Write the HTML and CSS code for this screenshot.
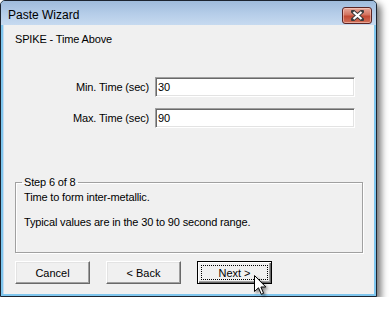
FILE: index.html
```html
<!DOCTYPE html>
<html lang="en">
<head>
    <meta charset="UTF-8">
    <title>Paste Wizard</title>
    <link rel="stylesheet" href="styles.css">
</head>
<body>
    <div class="window">
        <div class="titlebar">
            <span class="title">Paste Wizard</span>
            <span class="close">
                <svg width="13" height="11" viewBox="0 0 13 11">
                    <path d="M2 1.5 L11 9.5 M11 1.5 L2 9.5" stroke="#3b3b3b" stroke-width="4" stroke-linecap="square"/>
                    <path d="M2.5 2 L10.5 9 M10.5 2 L2.5 9" stroke="#ffffff" stroke-width="2.2"/>
                </svg>
            </span>
        </div>
        <div class="client">
            <div class="heading">SPIKE - Time Above</div>
            <div class="form">
                <div class="row">
                    <label for="min">Min. Time (sec)</label>
                    <input id="min" type="text" value="30">
                </div>
                <div class="row">
                    <label for="max">Max. Time (sec)</label>
                    <input id="max" type="text" value="90">
                </div>
            </div>
            <fieldset class="group">
                <legend>Step 6 of 8</legend>
                <p>Time to form inter-metallic.</p>
                <p class="gap">Typical values are in the 30 to 90 second range.</p>
            </fieldset>
            <div class="buttons">
                <button class="btn">Cancel</button>
                <button class="btn">&lt; Back</button>
                <button class="btn default"><span class="focus">Next &gt;</span></button>
            </div>
        </div>
    </div>
    <!-- mouse pointer over the Next button -->
    <svg class="cursor" width="14" height="21" viewBox="0 0 14 21">
        <path d="M0.5 0.5 L0.5 16.5 L4.5 12.8 L7.3 19.3 L9.6 18.3 L6.9 12 L11.8 12 Z" fill="#ffffff" stroke="#000000" stroke-width="1" stroke-linejoin="miter"/>
    </svg>
</body>
</html>
```

FILE: styles.css
```css
*{
    padding: 0;
    margin: 0;
    box-sizing: border-box;
}
body{
    background: #ffffff;
    font-family: "Liberation Sans", Arial, sans-serif;
    font-size: 11px;
    letter-spacing: -0.15px;
    color: #000000;
}
.window{
    width: 377px;
    height: 297px;
    border: 1px solid #1c2430;
    border-radius: 5px 5px 0 0;
    background: #7fc6ee;
    padding: 0 2px 2px 2px;
    display: flex;
    flex-direction: column;
    box-shadow: 4px 4px 7px rgba(0, 0, 0, 0.55);
}
.titlebar{
    height: 24px;
    margin: 0 -2px;
    padding: 0 4px 0 7px;
    border-radius: 4px 4px 0 0;
    background: linear-gradient(#9fbbdc, #b4cce8 50%, #c6daf0);
    display: flex;
    align-items: center;
    justify-content: space-between;
}
.title{
    font-size: 12px;
    letter-spacing: 0;
    color: #000000;
    margin-top: 4px;
}
.close{
    width: 30px;
    height: 17px;
    margin-top: 4px;
    border: 1px solid #5a2424;
    border-radius: 3px;
    background: linear-gradient(#e8a99c, #d2735f 45%, #c24a34 55%, #d0705a);
    box-shadow: inset 0 0 0 1px rgba(255, 220, 210, 0.5);
    display: flex;
    align-items: center;
    justify-content: center;
}
.close svg{
    display: block;
}
.client{
    flex: 1;
    background: #f0f0f0;
    border-left: 1px solid #c7dbef;
    display: flex;
    flex-direction: column;
}
.heading{
    padding: 8px 0 0 11px;
    line-height: 13px;
}
.form{
    margin-top: 31px;
    display: flex;
    flex-direction: column;
    gap: 11px;
}
.row{
    display: flex;
    align-items: center;
    gap: 6px;
}
.row label{
    width: 145px;
    text-align: right;
}
.row input{
    width: 200px;
    height: 20px;
    font: inherit;
    padding: 0 2px;
    background: #ffffff;
    border: 1px solid;
    border-color: #a0a0a0 #ffffff #ffffff #a0a0a0;
    box-shadow: inset 1px 1px 0 #696969, inset -1px -1px 0 #e3e3e3;
    outline: none;
}
.group{
    margin: 48px 11px 0 11px;
    padding: 0 0 23px 8px;
    border: 1px solid #a0a0a0;
    box-shadow: 1px 1px 0 #ffffff, inset 1px 1px 0 #ffffff;
}
.group legend{
    padding: 0 2px;
    margin-left: -2px;
    line-height: 13px;
}
.group p{
    margin-top: 2px;
    line-height: 13px;
}
.group p.gap{
    margin-top: 12px;
}
.buttons{
    margin: 8px 0 0 11px;
    display: flex;
    gap: 16px;
}
.btn{
    width: 75px;
    height: 23px;
    font: inherit;
    color: #000000;
    background: #f0f0f0;
    border: 1px solid;
    border-color: #ffffff #696969 #696969 #ffffff;
    box-shadow: inset -1px -1px 0 #a0a0a0, inset 1px 1px 0 #e3e3e3;
    display: flex;
    align-items: center;
    justify-content: center;
}
.btn.default{
    border: 1px solid #000000;
    box-shadow: inset 1px 1px 0 #ffffff, inset -1px -1px 0 #696969, inset -2px -2px 0 #a0a0a0;
    padding: 3px;
}
.btn .focus{
    width: 100%;
    height: 100%;
    border: 1px dotted #000000;
    display: flex;
    align-items: center;
    justify-content: center;
}
.cursor{
    position: absolute;
    left: 254px;
    top: 275px;
    filter: drop-shadow(2px 2px 1.5px rgba(0, 0, 0, 0.45));
}
```
